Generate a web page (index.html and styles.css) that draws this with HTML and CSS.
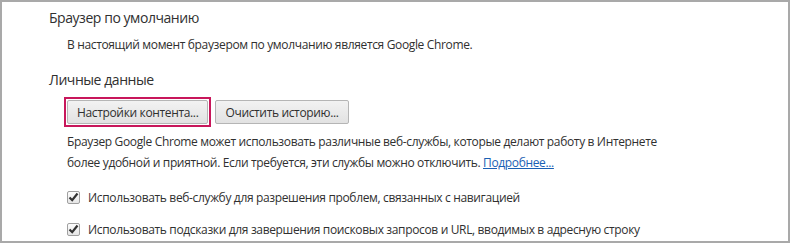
FILE: index.html
```html
<!DOCTYPE html>
<html lang="ru">
<head>
    <meta charset="UTF-8">
    <title>Настройки</title>
    <link rel="stylesheet" href="styles.css">
</head>
<body>
    <div class="frame">
        <div class="section">
            <h3>Браузер по умолчанию</h3>
            <div class="section-body">
                <p class="note">В настоящий момент браузером по умолчанию является Google Chrome.</p>
            </div>
        </div>

        <div class="section">
            <h3>Личные данные</h3>
            <div class="section-body">
                <div class="buttons">
                    <span class="focus-ring"><button class="button">Настройки контента...</button></span>
                    <button class="button">Очистить историю...</button>
                </div>
                <p class="text">Браузер Google Chrome может использовать различные веб-службы, которые делают работу в Интернете более удобной и приятной. Если требуется, эти службы можно отключить. <a href="#">Подробнее...</a></p>
                <label class="check"><span class="box"><svg width="11" height="10" viewBox="0 0 11 10"><path d="M1.5 5.5 L4.2 8.2 L9.5 1.5" fill="none" stroke="#333" stroke-width="2.2"/></svg></span>Использовать веб-службу для разрешения проблем, связанных с навигацией</label>
                <label class="check"><span class="box"><svg width="11" height="10" viewBox="0 0 11 10"><path d="M1.5 5.5 L4.2 8.2 L9.5 1.5" fill="none" stroke="#333" stroke-width="2.2"/></svg></span>Использовать подсказки для завершения поисковых запросов и URL, вводимых в адресную строку</label>
            </div>
        </div>
    </div>
</body>
</html>
```

FILE: styles.css
```css
html, body {
    margin: 0;
    padding: 0;
    height: 100%;
}
body {
    font-family: "Open Sans", "Noto Sans", sans-serif;
    color: #303030;
    background: #fff;
    letter-spacing: -0.35px;
}
.frame {
    box-sizing: border-box;
    height: 243px;
    border: 2px solid #a9a9a9;
    padding: 6px 0 0 47px;
    overflow: hidden;
}
.section h3 {
    font-size: 14px;
    font-weight: normal;
    margin: 0;
    line-height: 20px;
    letter-spacing: -0.45px;
}
.section-body {
    padding-left: 18px;
}
.note {
    font-size: 12px;
    margin: 8px 0 16px;
    line-height: 18px;
}
.buttons {
    display: flex;
    align-items: center;
    gap: 4px;
    margin: 7px 0 0 -3px;
}
.focus-ring {
    display: inline-flex;
    border: 2px solid #c8175b;
    padding: 1px;
}
.button {
    font-family: inherit;
    font-size: 12px;
    letter-spacing: -0.35px;
    color: #303030;
    height: 24px;
    padding: 0 9px;
    border: 1px solid #b5b5b5;
    border-radius: 2px;
    background: linear-gradient(#f2f2f2, #e2e2e2);
}
.text {
    font-size: 12px;
    line-height: 21px;
    width: 610px;
    margin: 4px 0 8px;
}
.text a {
    color: #1a5fb4;
}
.check {
    display: flex;
    align-items: center;
    font-size: 12px;
    height: 32px;
}
.box {
    box-sizing: border-box;
    width: 13px;
    height: 13px;
    border: 1px solid #a0a0a0;
    border-radius: 2px;
    background: linear-gradient(#fdfdfd, #e6e6e6);
    margin-right: 8px;
    display: flex;
    align-items: center;
    justify-content: center;
}
```
